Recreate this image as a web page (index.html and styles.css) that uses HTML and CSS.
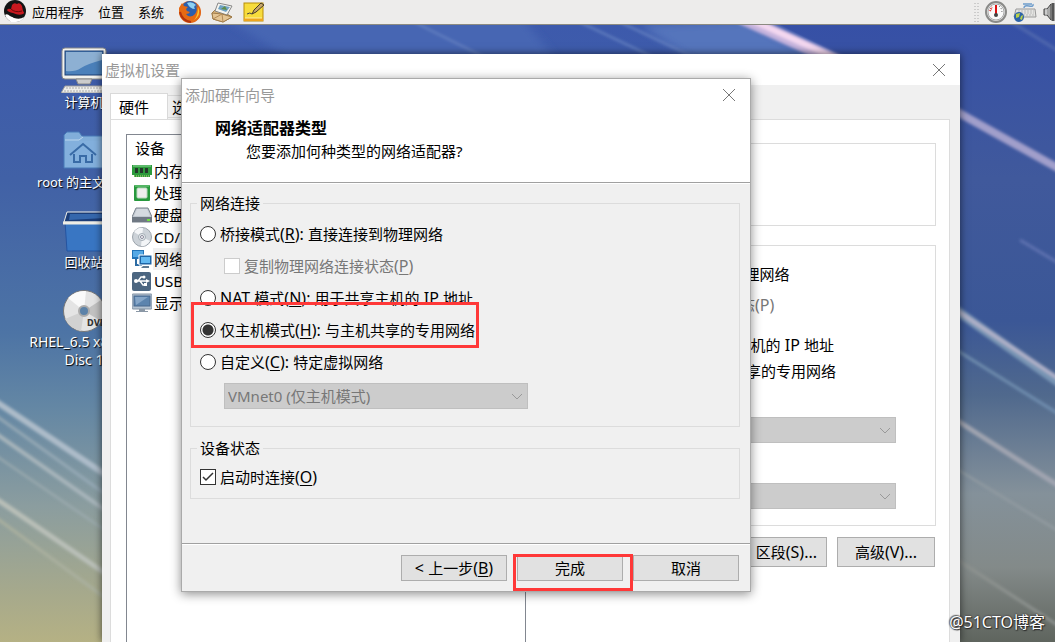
FILE: index.html
```html
<!DOCTYPE html>
<html lang="zh-CN">
<head>
<meta charset="utf-8">
<title>虚拟机设置</title>
<link rel="stylesheet" href="styles.css">
</head>
<body>
<header class="panel">
  <nav class="panel-menu">
    <svg class="i-hat" viewBox="0 0 24 24"><circle cx="12" cy="11" r="11" fill="#141414"/><path d="M2 15Q4 13 7 16L11 18Q17 20 21 17Q19 22 12 22T2 15Z" fill="#fff"/><path d="M3 17L9 17L14 22H8Z" fill="#fff"/><path d="M4 10Q5 8 8 9L9 5Q11 2 14 4Q17 2 19 6L20 11Q22 13 20 14Q16 16 10 13Q5 12 4 10Z" fill="#c8191f"/><path d="M8 9Q12 13 19 11" stroke="#6b0b0d" fill="none"/></svg>
    <a href="#apps">应用程序</a>
    <a href="#places">位置</a>
    <a href="#system">系统</a>
    <svg class="i-app" viewBox="0 0 24 24"><circle cx="12" cy="12" r="11" fill="#e0641a"/><circle cx="12" cy="9" r="8" fill="#2a5fae"/><path d="M9 3Q14 1 18 5Q15 6 17 9Q12 9 9 3Z" fill="#8ed0f2"/><path d="M1 8L4 3L6 6L10 7Q7 9 9 11L12 12Q11 14 8 14Q12 19 17 14Q20 10 18 5Q24 11 22 17Q17 24 9 22Q0 18 1 8Z" fill="#e66a13"/><path d="M20 7Q24 15 15 21Q20 17 20 7Z" fill="#fbc52f"/><path d="M2 12Q4 21 13 22" stroke="#b3330d" stroke-width="2" fill="none"/></svg>
    <svg class="i-app" viewBox="0 0 24 24"><path d="M2 13L7 8L22 17L13 22L3 19Z" fill="#d9b27a" stroke="#a07c4a"/><path d="M8 3L22 6L17 15L5 11Z" fill="#f4f4f0" stroke="#888"/><path d="M10 5L20 7L16 12L8 9Z" fill="#6fa2c4"/><path d="M11 9L15 6L17 10Z" fill="#5e8c4a"/><path d="M2 13L12 14L22 17L13 22L3 19Z" fill="#e5c594" stroke="#a07c4a"/><path d="M3 19L12 14L13 22" fill="none" stroke="#b38b58"/></svg>
    <svg class="i-app" viewBox="0 0 24 24"><rect x="2" y="3" width="19" height="18" fill="#f7dc3c" stroke="#b88d0a"/><path d="M2 18H21V21H2Z" fill="#eda51c"/><path d="M3 18H20" stroke="#fff1a0"/><path d="M10 14L12 10L19 3L22 5L14 12Z" fill="#c9a86b" stroke="#463b25"/><path d="M5 14Q8 12 10 14" stroke="#444" fill="none"/></svg>
  </nav>
  <div class="tray">
    <svg class="i-grip" viewBox="0 0 6 20"><path d="M1 1V20M4 1V20" stroke="#aaa" stroke-dasharray="1 2"/></svg>
    <svg class="i-app" viewBox="0 0 24 24"><circle cx="12" cy="12" r="10" fill="#eee" stroke="#8a8a88" stroke-width="2"/><circle cx="12" cy="12" r="8" fill="#fafafa" stroke="#aaa"/><path d="M6 11L8 7" stroke="#d22" stroke-width="2" stroke-dasharray="1 1"/><path d="M12 15V5" stroke="#d11" stroke-width="2"/><circle cx="12" cy="15" r="2" fill="#444"/><path d="M15 6L17 8L18 12" stroke="#666" stroke-dasharray="1 2" fill="none"/></svg>
    <svg class="i-key" viewBox="0 0 26 24"><path d="M12 8Q12 5 17 6T21 4M11 4H20" stroke="#6e9ccb" stroke-width="1.4" fill="none"/><path d="M4 9H23L24 17H2Z" fill="#e4e4e2" stroke="#999"/><path d="M6 11H22M6 13H22M5 15H23" stroke="#bbb" stroke-dasharray="2 1"/><circle cx="7" cy="17" r="5" fill="#2d63a8"/><path d="M4 14L8 13L7 17L4 18ZM9 16L11 15L10 20L8 19Z" fill="#b8d04a"/></svg>
    <svg class="i-sound" viewBox="0 0 13 24"><path d="M2 9H5L9 4V20L5 15H2Z" fill="#aaa" stroke="#444"/><path d="M11 3V21" stroke="#555" stroke-width="3"/><path d="M4 9V15" stroke="#eee"/></svg>
  </div>
</header>

<main class="desktop">
  <svg class="wallpaper" viewBox="0 0 1055 617" preserveAspectRatio="none">
    <defs>
      <linearGradient id="sky" x1="0" y1="0" x2="0" y2="1"><stop offset="0" stop-color="#3d5aac"/><stop offset=".25" stop-color="#4161a6"/><stop offset=".5" stop-color="#4d74a5"/><stop offset=".62" stop-color="#6487a4"/><stop offset=".78" stop-color="#8b9d9f"/><stop offset=".92" stop-color="#a6a98c"/><stop offset="1" stop-color="#b5b184"/></linearGradient>
      <linearGradient id="east" x1="0" y1="0" x2="0" y2="1"><stop offset="0" stop-color="#3650a6"/><stop offset=".25" stop-color="#40599c"/><stop offset=".48" stop-color="#3b5796"/><stop offset=".6" stop-color="#50698d"/><stop offset=".76" stop-color="#84919a"/><stop offset=".88" stop-color="#838a89"/><stop offset="1" stop-color="#5f655e"/></linearGradient>
      <filter id="b1"><feGaussianBlur stdDeviation="1.5"/></filter>
      <filter id="b3"><feGaussianBlur stdDeviation="4"/></filter>
    </defs>
    <rect width="1055" height="617" fill="url(#sky)"/>
    <path d="M780 0H1055V617H900V60Z" fill="url(#east)"/>
    <path d="M220 -10L520 -10L560 40L300 40Z" fill="#4766b3" filter="url(#b3)"/>
    <path d="M640 0L745 -5L830 40L700 40Z" fill="#5474bc" filter="url(#b3)"/>
    <g filter="url(#b1)" fill="none">
      <path d="M740 -8L850 42" stroke="#c5b3dd" stroke-width="13"/>
      <path d="M745 -8L850 40" stroke="#f4d8f0" stroke-width="6"/>
      <path d="M400 -10L500 40M565 -10L680 45M605 -10L700 35" stroke="#6480c0" stroke-width="2"/>
      <path d="M950 83L1065 147" stroke="#a19fcb" stroke-width="8"/>
      <path d="M1000 -10L1065 30" stroke="#5068ae" stroke-width="3"/>
      <path d="M1020 215L1065 242" stroke="#5f72b0" stroke-width="3"/>
      <path d="M950 281L1065 362" stroke="#7894b4" stroke-width="9"/>
      <path d="M950 281L1065 358" stroke="#b0b1c8" stroke-width="4"/>
      <path d="M950 321L1065 393" stroke="#6f8dae" stroke-width="3"/>
      <path d="M950 391L1065 465" stroke="#a0a4b0" stroke-width="5"/>
      <path d="M950 440L1065 510" stroke="#949da3" stroke-width="2"/>
      <path d="M950 530L1065 605" stroke="#8d928f" stroke-width="3"/>
      <path d="M-5 376L115 456" stroke="#adbcc9" stroke-width="6"/>
      <path d="M-5 390L115 476" stroke="#95a9b5" stroke-width="3"/>
      <path d="M-5 408L115 492" stroke="#a8b5bb" stroke-width="4"/>
      <path d="M-5 430L115 512" stroke="#9dacb0" stroke-width="2"/>
      <path d="M-5 473L115 555" stroke="#b9bfb8" stroke-width="5"/>
      <path d="M-5 492L115 580" stroke="#aab09f" stroke-width="3"/>
    </g>
  </svg>

  <ul class="shortcuts">
    <li>
      <svg viewBox="0 0 46 46"><rect x="1" y="1" width="44" height="31" rx="3" fill="#f2f2ee" stroke="#888"/><rect x="4" y="4" width="38" height="24" fill="#4b80ba" stroke="#1c3f75"/><path d="M5 5H41V13Q26 17 20 21T5 24Z" fill="#8db0d3"/><path d="M15 32H31L29 37H17Z" fill="#ccc" stroke="#888"/><path d="M4 39H42L45 46H0Z" fill="#ededea" stroke="#999"/><path d="M5 41H41M3 44H42" stroke="#aaa" stroke-dasharray="2 1"/></svg>
      <span>计算机</span>
    </li>
    <li>
      <svg viewBox="0 0 46 46"><path d="M3 41V8L6 5H18L21 9H44V41Z" fill="#81aeda" stroke="#487bb8"/><path d="M4 13H18L22 10" stroke="#bcd7ef" fill="none"/><path d="M4 14H43V40H4Z" fill="#83b0dd"/><path d="M9 28L22 17L35 28M13 27V35H19V29H25V35H31V27" fill="none" stroke="#396ba6" stroke-width="2"/></svg>
      <span>root 的主文件夹</span>
    </li>
    <li>
      <svg viewBox="0 0 46 46"><path d="M4 14L6 44H44V14Z" fill="#3976c3" stroke="#2554a0"/><path d="M6 5H46V15H3Z" fill="#1b3d78" stroke="#f0efe8"/><path d="M9 7H44V11L8 13Z" fill="#3567ac"/><path d="M2 16H45" stroke="#eeede6" stroke-width="3"/></svg>
      <span>回收站</span>
    </li>
    <li>
      <svg viewBox="0 0 46 46"><circle cx="23" cy="24" r="20.5" fill="#e4e4e4" stroke="#777"/><path d="M23 24L7 11Q15 3 25 4Z" fill="#fafafa"/><path d="M23 24L40 13Q45 23 40 34Z" fill="#c2c2c2"/><path d="M23 24L4 32Q9 42 20 44Z" fill="#d1d1d1"/><circle cx="23" cy="24" r="5" fill="#5c82a8" stroke="#aaa" stroke-width="2"/><text x="26" y="39" class="disc-tag">DVD</text></svg>
      <span class="disc-name">RHEL_6.5 x86_64<br>Disc 1</span>
    </li>
  </ul>

  <section class="window settings">
    <div class="titlebar"><span>虚拟机设置</span>
      <button class="close" aria-label="关闭"><svg viewBox="0 0 12 12"><path d="M0 0L12 12M12 0L0 12"/></svg></button></div>
    <div class="settings-body">
      <div class="tabs"><button class="tab active">硬件</button><button class="tab">选项</button></div>
      <div class="pane">
        <div class="devices">
          <div class="devices-head">设备</div>
          <ul>
            <li><svg viewBox="0 0 20 20"><path d="M0 4H20V14H18V16H2V14H0Z" fill="#2c9a3c"/><path d="M1 5H19" stroke="#8fd99a"/><path d="M3 7H6V12H3ZM8 7H11V12H8ZM13 7H16V12H13Z" fill="#23382a"/><path d="M2 15H18" stroke="#c7d878" stroke-dasharray="1 1"/></svg>内存</li>
            <li><svg viewBox="0 0 20 20"><rect x="2" y="2" width="16" height="16" rx="1" fill="#27983d"/><path d="M3 3H17" stroke="#82d38d"/><rect x="5" y="5" width="10" height="10" rx="1" fill="#eee" stroke="#b9d9bd"/></svg>处理器</li>
            <li><svg viewBox="0 0 20 20"><path d="M4 3H16L20 12V17H0V12Z" fill="#bfc6cf" stroke="#7a838d"/><path d="M0 12H20V17H0Z" fill="#6f7883"/><path d="M5 4H15L18 11H2Z" fill="#d5dae0"/><path d="M15 15H18" stroke="#6de03f" stroke-width="2"/></svg>硬盘 (SCSI)</li>
            <li><svg viewBox="0 0 20 20"><circle cx="10" cy="10" r="9.5" fill="#ccd2d8" stroke="#9ca4ac"/><path d="M10 10L2 5Q6 0 11 1ZM10 10L18 14Q14 20 9 19Z" fill="#f3f5f7"/><circle cx="10" cy="10" r="3.5" fill="#e9edf0" stroke="#a4adb5"/><circle cx="10" cy="10" r="1.5" fill="#fff" stroke="#889"/></svg>CD/DVD (IDE)</li>
            <li class="selected"><svg viewBox="0 0 20 20"><path d="M0 1H12V10H0Z" fill="#2173b8"/><path d="M1 2H11V8H1Z" fill="#55a9e6"/><path d="M4 10V16H10" stroke="#2c6ca4" stroke-width="2" fill="none"/><path d="M7 6H20V16H7Z" fill="#1d65a7" stroke="#fff"/><path d="M9 8H18V14H9Z" fill="#62b9f2"/><path d="M11 17H17V19H9Z" fill="#5e7a93"/></svg>网络适配器</li>
            <li><svg viewBox="0 0 20 20"><rect width="19" height="19" y="1" rx="2" fill="#4c6681"/><path d="M3 10H15M6 10L9 6H12M8 10L11 14H13" stroke="#fff" stroke-width="1.4" fill="none"/><circle cx="4" cy="10" r="2" fill="#fff"/><circle cx="12" cy="6" r="1.5" fill="#fff"/><path d="M12 12H15V15H12ZM14 8L18 10L14 12Z" fill="#fff"/></svg>USB 控制器</li>
            <li><svg viewBox="0 0 20 20"><rect x="0" y="1" width="20" height="15" rx="1" fill="#b4c3d2" stroke="#8090a2"/><rect x="2" y="3" width="16" height="10" fill="#5c84ae" stroke="#48698d"/><path d="M3 4H16L4 12Z" fill="#86a6c8"/><path d="M7 16H13V18H16V19H4V18H7Z" fill="#8b98a6"/></svg>显示器</li>
          </ul>
        </div>
        <div class="details">
          <div class="box status-box"></div>
          <div class="box net-box">
            <label class="row"><input type="radio" name="vm-net"><span>桥接模式<span class="en">(B): </span>直接连接物理网络</span></label>
            <label class="row sub dim"><input type="checkbox" disabled><span>复制物理网络连接状态<span class="en">(P)</span></span></label>
            <label class="row nat"><input type="radio" name="vm-net"><span><span class="en">NAT </span>模式<span class="en">(N): </span>用于共享主机的<span class="en"> IP </span>地址</span></label>
            <label class="row host"><input type="radio" name="vm-net"><span>仅主机模式<span class="en">(H): </span>与主机共享的专用网络</span></label>
            <div class="combo"><select disabled aria-label="虚拟网络"><option></option></select><svg viewBox="0 0 10 6"><path d="M0 0L5 5L10 0"/></svg></div>
            <div class="combo"><select disabled aria-label="区段"><option></option></select><svg viewBox="0 0 10 6"><path d="M0 0L5 5L10 0"/></svg></div>
          </div>
          <div class="detail-actions"><button class="btn lan">LAN 区段<span class="en">(S)...</span></button><button class="btn adv">高级<span class="en">(V)...</span></button></div>
        </div>
      </div>
    </div>
  </section>

  <section class="window wizard" role="dialog" aria-label="添加硬件向导">
    <div class="titlebar"><span>添加硬件向导</span>
      <button class="close" aria-label="关闭"><svg viewBox="0 0 12 12"><path d="M0 0L12 12M12 0L0 12"/></svg></button></div>
    <div class="wizard-head">
      <h1>网络适配器类型</h1>
      <p>您要添加何种类型的网络适配器?</p>
    </div>
    <form class="wizard-body">
      <fieldset>
        <legend>网络连接</legend>
        <div class="rows">
          <label class="row"><input type="radio" name="net"><span>桥接模式<span class="en">(<u>R</u>): </span>直接连接到物理网络</span></label>
          <label class="row sub dim"><input type="checkbox" disabled><span>复制物理网络连接状态<span class="en">(<u>P</u>)</span></span></label>
          <label class="row"><input type="radio" name="net"><span><span class="en">NAT </span>模式<span class="en">(<u>N</u>): </span>用于共享主机的<span class="en"> IP </span>地址</span></label>
          <label class="row marked"><input type="radio" name="net" checked><span>仅主机模式<span class="en">(<u>H</u>): </span>与主机共享的专用网络</span></label>
          <label class="row"><input type="radio" name="net"><span>自定义<span class="en">(<u>C</u>): </span>特定虚拟网络</span></label>
          <div class="combo"><select disabled aria-label="特定虚拟网络"><option>VMnet0 (仅主机模式)</option></select><svg viewBox="0 0 10 6"><path d="M0 0L5 5L10 0"/></svg></div>
        </div>
      </fieldset>
      <fieldset class="state">
        <legend>设备状态</legend>
        <label class="row"><input type="checkbox" checked><span>启动时连接<span class="en">(<u>O</u>)</span></span></label>
      </fieldset>
    </form>
    <div class="wizard-foot">
      <button class="btn"><span class="en">&lt; </span>上一步<span class="en">(<u>B</u>)</span></button>
      <span class="marked-btn"><button class="btn">完成</button></span>
      <button class="btn">取消</button>
    </div>
  </section>

  <div class="watermark">@51CTO博客</div>
</main>
</body>
</html>
```
FILE: styles.css
```css
* { box-sizing: border-box; }
body {
  margin: 0;
  height: 100vh;
  display: flex;
  flex-direction: column;
  overflow: hidden;
  font: 15px/24px "Noto Sans", "Noto Sans CJK SC", sans-serif;
  color: #000;
}
button, select, input { font: inherit; color: inherit; margin: 0; }
svg { display: block; flex: none; }
ul { list-style: none; margin: 0; padding: 0; }

/* top panel */
.panel {
  height: 25px;
  display: flex;
  justify-content: space-between;
  background: #edeceb;
  border-bottom: 1px solid #8c8b82;
  font-size: 13px;
}
.panel-menu, .tray { display: flex; align-items: center; }
.panel-menu { padding-left: 3px; }
.panel-menu a { color: #000; text-decoration: none; margin-right: 14px; }
.i-hat { width: 24px; height: 24px; margin-right: 5px; }
.i-app { width: 24px; height: 24px; }
.panel-menu .i-app { margin-right: 8px; }
.tray .i-app { margin: 0 4px; }
.i-grip { width: 6px; height: 20px; }
.i-key { width: 26px; height: 24px; margin-right: 4px; }
.i-sound { width: 13px; height: 24px; }

/* desktop */
.desktop { position: relative; flex: 1; overflow: hidden; background: #4161a6; }
.wallpaper { position: absolute; inset: 0; width: 100%; height: 100%; }
.shortcuts {
  position: relative;
  width: 168px;
  padding-top: 22px;
  display: flex;
  flex-direction: column;
  gap: 16px;
}
.shortcuts li {
  display: flex;
  flex-direction: column;
  align-items: center;
  text-align: center;
  color: #fff;
  font-size: 13px;
  line-height: 18px;
  white-space: nowrap;
  text-shadow: 1px 1px 1px #000;
}
.shortcuts svg { width: 46px; height: 46px; }
.shortcuts .disc-name { font-size: 14px; }
.disc-tag { font: bold 8px "DejaVu Sans", sans-serif; fill: #333; text-shadow: none; }

/* windows */
.window { position: absolute; display: flex; flex-direction: column; background: #f0f0f0; }
.titlebar {
  display: flex;
  justify-content: space-between;
  align-items: center;
  height: 31px;
  padding: 0 14px 0 3px;
  background: #fff;
  color: #999;
}
.close { width: 14px; height: 14px; padding: 1px; border: 0; background: none; }
.close svg { width: 12px; height: 12px; stroke: #777; overflow: visible; }

.settings {
  left: 102px;
  right: 95px;
  top: 29px;
  bottom: 0;
  box-shadow: 0 0 8px rgba(0, 0, 0, .6);
}
.settings-body { flex: 1; display: flex; flex-direction: column; padding: 8px 10px 0 8px; min-height: 0; }
.tabs { display: flex; align-items: flex-end; height: 26px; }
.tab {
  height: 23px;
  padding: 0 4px;
  border: 1px solid #d9d9d9;
  border-left: 0;
  background: #f0f0f0;
  line-height: 20px;
  width: 58px;
  text-align: left;
  margin-bottom: 1px;
}
.tab.active {
  position: relative;
  height: 26px;
  margin: 0;
  padding: 0 8px;
  border-left: 1px solid #d9d9d9;
  border-bottom: 0;
  background: #fff;
}
.pane {
  flex: 1;
  display: flex;
  min-height: 0;
  padding: 14px 13px 0 15px;
  border: 1px solid #dcdcdc;
  border-bottom: 0;
  background: #fff;
}
.devices { flex: 0 0 400px; border: 1px solid #828790; border-bottom: 0; padding-top: 1px; }
.devices-head { padding-left: 8px; }
.devices li { display: flex; align-items: center; gap: 2px; height: 22px; padding-left: 5px; white-space: nowrap; }
.devices svg { width: 20px; height: 20px; }
.selected { background: linear-gradient(90deg, transparent 26px, #f0f0f0 26px); }
.details { flex: 1; padding: 9px 0 0 15px; }
.box { border: 1px solid #dcdcdc; }
.status-box { height: 83px; margin-bottom: 19px; }
.net-box { padding: 16px 39px 16px 19px; }

.row { display: flex; align-items: center; gap: 4px; height: 24px; width: fit-content; white-space: nowrap; }
.row.sub { margin-left: 24px; }
.dim { color: #777; }
.en { font-size: 16px; white-space: pre; }
u { text-underline-offset: 2px; text-decoration-thickness: 1px; }
.net-box .sub { margin-top: 7px; }
.nat { margin-top: 16px; }
.host { margin: 2px 0 34px; }
.net-box .combo + .combo { margin-top: 40px; }

input[type="radio"], input[type="checkbox"] {
  appearance: none;
  flex: none;
  width: 16px;
  height: 16px;
  border: 1px solid #333;
  background: #fff;
}
input[type="radio"] { border-radius: 50%; }
input[type="radio"]:checked { background: radial-gradient(circle, #333 5px, #fff 6px); }
input[type="checkbox"]:checked {
  background: #fff url("data:image/svg+xml,%3Csvg xmlns='http://www.w3.org/2000/svg' viewBox='0 0 14 14'%3E%3Cpath d='M2 7L5 10L12 3' fill='none' stroke='%23333' stroke-width='1.5'/%3E%3C/svg%3E");
}
input[type="checkbox"]:disabled { border-color: #ccc; }

.combo { position: relative; height: 26px; }
.combo select {
  appearance: none;
  width: 100%;
  height: 26px;
  padding: 0 3px;
  border: 1px solid #bfbfbf;
  border-radius: 0;
  background: #ccc;
  color: #777;
  opacity: 1;
  line-height: 24px;
}
.combo svg { position: absolute; right: 6px; top: 11px; width: 10px; height: 6px; fill: none; stroke: #999; }

.btn {
  height: 26px;
  width: 106px;
  padding: 0;
  border: 1px solid #adadad;
  background: #e1e1e1;
  line-height: 24px;
  white-space: nowrap;
}
.detail-actions { display: flex; justify-content: flex-end; gap: 10px; padding: 11px 1px 0 0; }
.detail-actions .btn { height: 30px; }
.detail-actions .lan { width: 114px; }
.detail-actions .adv { width: 98px; }

/* wizard */
.wizard {
  left: 181px;
  right: 304px;
  top: 53px;
  border: 1px solid #aaa;
  box-shadow: 0 2px 10px rgba(0, 0, 0, .45);
}
.wizard-head { padding: 6px 33px 20px; background: #fff; border-bottom: 1px solid #a0a0a0; }
.wizard-head h1 { margin: 0; font-size: 16px; line-height: 24px; }
.wizard-head p { margin: 0; padding-left: 31px; line-height: 22px; }
.wizard-body { padding: 8px 10px 44px 8px; border-top: 1px solid #fff; }
fieldset { margin: 0; min-width: 0; padding: 8px 9px 17px; border: 1px solid #dcdcdc; }
legend { padding: 0 3px; margin-left: -3px; line-height: 22px; }
.rows { display: flex; flex-direction: column; gap: 8px; }
.rows .combo { width: 304px; margin: 1px 0 0 24px; }
fieldset.state { margin-top: 10px; padding: 6px 9px 9px; }
.marked, .marked-btn { position: relative; }
.marked::after, .marked-btn::after {
  content: "";
  position: absolute;
  border: 3px solid #ff3838;
  pointer-events: none;
}
.marked::after { inset: -16px -4px -6px -9px; }
.marked-btn { display: flex; }
.marked-btn::after { inset: -1px -10px -10px -4px; }
.wizard-foot {
  display: flex;
  justify-content: flex-end;
  gap: 10px;
  padding: 11px 11px 10px;
  border-top: 1px solid #a0a0a0;
  box-shadow: inset 0 1px #fff;
}

.watermark {
  position: absolute;
  right: 10px;
  bottom: 8px;
  color: #fff;
  text-shadow: 0 0 2px #000, 1px 1px 1px #333, -1px -1px 1px #777;
  font-size: 16px;
}
```
